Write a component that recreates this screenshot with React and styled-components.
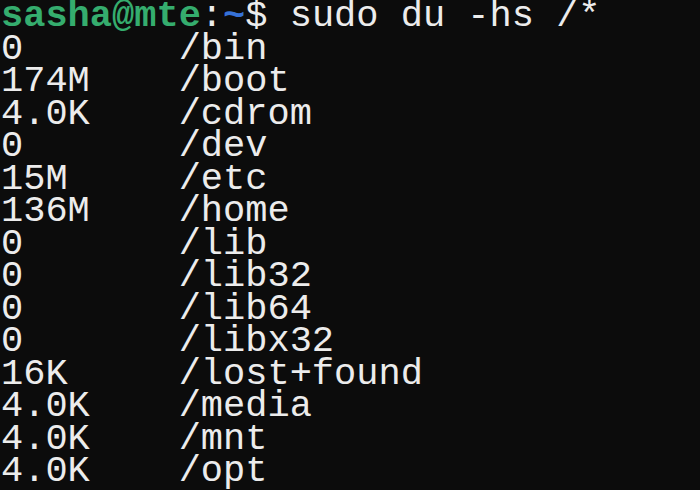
import React from "react";
import styled, { createGlobalStyle } from "styled-components";

const Global = createGlobalStyle`
  html, body {
    margin: 0;
    padding: 0;
    background: #0c0c0c;
  }
`;

const Terminal = styled.div`
  width: 700px;
  height: 490px;
  overflow: hidden;
  background: #0c0c0c;
  color: #ececec;
  font-family: "Liberation Mono", "DejaVu Sans Mono", monospace;
  font-size: 37px;
  line-height: 32.5px;
  padding: 0 0 0 1px;
  box-sizing: border-box;
`;

const Line = styled.div`
  white-space: pre;
`;

const User = styled.span`
  color: #35ad6e;
  font-weight: bold;
`;

const Path = styled.span`
  color: #3672d8;
  font-weight: bold;
`;

const rows = [
  ["0", "/bin"],
  ["174M", "/boot"],
  ["4.0K", "/cdrom"],
  ["0", "/dev"],
  ["15M", "/etc"],
  ["136M", "/home"],
  ["0", "/lib"],
  ["0", "/lib32"],
  ["0", "/lib64"],
  ["0", "/libx32"],
  ["16K", "/lost+found"],
  ["4.0K", "/media"],
  ["4.0K", "/mnt"],
  ["4.0K", "/opt"],
];

export default function App() {
  return (
    <>
      <Global />
      <Terminal>
        <Line>
          <User>sasha@mte</User>:<Path>~</Path>$ sudo du -hs /*
        </Line>
        {rows.map(([size, dir]) => (
          <Line key={dir}>{size.padEnd(8, " ") + dir}</Line>
        ))}
      </Terminal>
    </>
  );
}
